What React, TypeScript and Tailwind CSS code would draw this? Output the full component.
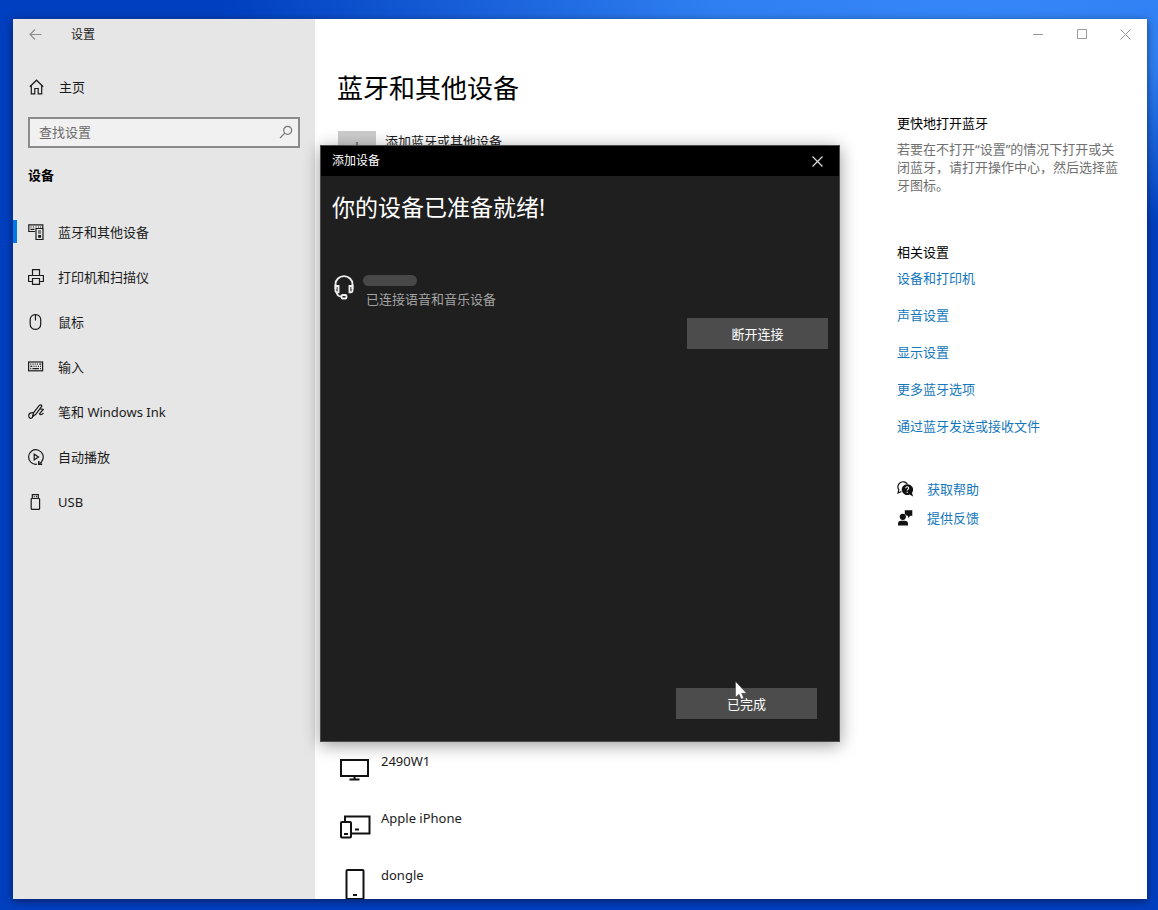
import type { ReactNode } from 'react';

const NAV_ITEMS = [
  { label: '蓝牙和其他设备', icon: <DevicesIcon />, active: true },
  { label: '打印机和扫描仪', icon: <PrinterIcon /> },
  { label: '鼠标', icon: <MouseIcon /> },
  { label: '输入', icon: <KeyboardIcon /> },
  { label: '笔和 Windows Ink', icon: <PenIcon /> },
  { label: '自动播放', icon: <AutoplayIcon /> },
  { label: 'USB', icon: <UsbIcon /> },
];

const RELATED_LINKS = [
  '设备和打印机',
  '声音设置',
  '显示设置',
  '更多蓝牙选项',
  '通过蓝牙发送或接收文件',
];

const DEVICES = [
  { name: '2490W1', icon: <MonitorIcon /> },
  { name: 'Apple iPhone', icon: <MultiDeviceIcon /> },
  { name: 'dongle', icon: <PhoneIcon /> },
];

function Icon({ children }: { children: ReactNode }) {
  return (
    <svg
      viewBox="0 0 16 16"
      className="size-4 shrink-0"
      fill="none"
      stroke="currentColor"
      strokeWidth="1.2"
      aria-hidden="true"
    >
      {children}
    </svg>
  );
}

function DevicesIcon() {
  return (
    <Icon>
      <path d="M7 7.5H.8V.8h14V4" />
      <path d="M2.500 3h1M5 3h1M7.500 3h1M10 3h1M12 3h1M2.500 5.300h4" />
      <path d="M8 4.500h7v11H8z" />
      <path d="M10 7h3M10 9h3" />
      <path d="M10.800 11.500h1.700v1.700h-1.700z" fill="currentColor" />
    </Icon>
  );
}

function PrinterIcon() {
  return (
    <Icon>
      <path d="M4.500 6.500V.7h7v5.800" />
      <path d="M4 12.500H.6v-6h14.800v6H12" />
      <path d="M4.500 9.500h7v5.800h-7z" />
    </Icon>
  );
}

function MouseIcon() {
  return (
    <Icon>
      <rect x="2.200" y=".7" width="10.500" height="14.600" rx="4.800" />
      <path d="M7.450 1v5.500" />
    </Icon>
  );
}

function KeyboardIcon() {
  return (
    <Icon>
      <rect x=".6" y="3" width="14" height="8.800" />
      <path d="M2.300 5.200h1M4.500 5.200h1M6.700 5.200h1M8.900 5.200h1M11.300 5.200h2M2.300 7.400h2M5.500 7.400h1M7.700 7.400h1M9.900 7.400h1M12.100 7.400h1M2.300 9.700h1M4.500 9.700h6.400M12.100 9.700h1" />
    </Icon>
  );
}

function PenIcon() {
  return (
    <Icon>
      <path d="M4.600 12.500l.9-3.700 6-7.600c1.200-1 2.800.1 2 1.500L7.800 10.300z" />
      <path d="M5.500 8.600C3 8.300.7 9.200.7 11.800c0 3 3.300 3.400 4.200.8" />
      <path d="M12.300 4.800l2.900.7-3.700 4.300c1 1.300 2.800.8 4-.8" />
    </Icon>
  );
}

function AutoplayIcon() {
  return (
    <Icon>
      <path d="M9 15.200A7.300 7.300 0 1 1 14.300 11.500" />
      <path d="M6.200 5.200v5.600l4.300-2.800z" />
      <path d="M14.500 11q-.8 2.500-3 3.800" />
      <path d="M10.800 12v3.300h3.400" strokeWidth="1.500" />
    </Icon>
  );
}

function UsbIcon() {
  return (
    <Icon>
      <path d="M4.300 4.500V.7h6v3.800" />
      <path d="M5.800 2.600h1M8 2.600h1" />
      <rect x="3.200" y="4.500" width="8.400" height="10.800" rx=".5" />
    </Icon>
  );
}

function HomeIcon() {
  return (
    <Icon>
      <path d="M.8 7.800L7.500 1.200l6.700 6.600" />
      <path d="M2.300 6.500v8.300h3.500V9.500h3.400v5.300h3.500V6.500" />
    </Icon>
  );
}

function DeviceFrame({ children }: { children: ReactNode }) {
  return (
    <svg
      viewBox="0 0 34 34"
      className="size-[34px] shrink-0"
      fill="none"
      stroke="#111"
      strokeWidth="2"
      aria-hidden="true"
    >
      {children}
    </svg>
  );
}

function MonitorIcon() {
  return (
    <DeviceFrame>
      <path d="M3 9h27v16H3zM16.500 25v3M11.500 28.500h10" />
    </DeviceFrame>
  );
}

function MultiDeviceIcon() {
  return (
    <DeviceFrame>
      <path d="M7 13V8.500h24.500V25.500H14" />
      <rect x="3" y="14" width="10" height="15.500" rx="1" />
      <path d="M6 26h4M17 21.500h4" />
    </DeviceFrame>
  );
}

function PhoneIcon() {
  return (
    <DeviceFrame>
      <rect x="8.500" y="5" width="17" height="29" rx="1" />
      <path d="M15 30h4" />
    </DeviceFrame>
  );
}

function HeadsetIcon() {
  return (
    <svg
      viewBox="0 0 20 25"
      className="h-[25px] w-5 shrink-0"
      fill="none"
      stroke="#eee"
      strokeWidth="1.900"
      aria-hidden="true"
    >
      <path d="M1.500 14V9.300a8.500 8.200 0 0 1 17 0V14" />
      <path d="M1.500 11h3v6.300H3q-1.500 0-1.500-1.500zM18.500 11h-3v6.300H17q1.500 0 1.500-1.500z" />
      <path d="M2.500 17q.5 4.500 5 4.500" />
      <rect x="7.500" y="20" width="5" height="3.500" rx="1.300" />
    </svg>
  );
}

function HelpIcon() {
  return (
    <svg viewBox="0 0 16 16" className="size-4 shrink-0" aria-hidden="true">
      <path
        d="M4.500 10.500L1 12l.8-3.200A5 5 0 1 1 10.300 3"
        fill="none"
        stroke="#111"
        strokeWidth="1.200"
      />
      <path d="M10.200 3.200a5.400 5.400 0 1 0 2.400 10.200L16 15.500l-1-3.700A5.400 5.400 0 0 0 10.200 3.200z" fill="#111" />
      <path
        d="M8.700 7.200c0-2 3-2 3 0 0 1.200-1.500 1.100-1.500 2.400M10.200 10.700v1.200"
        fill="none"
        stroke="#fff"
        strokeWidth="1.100"
      />
    </svg>
  );
}

function FeedbackIcon() {
  return (
    <svg viewBox="0 0 16 16" className="size-4 shrink-0" fill="#111" aria-hidden="true">
      <circle cx="5.800" cy="6.800" r="3.100" />
      <path d="M1 15.500v-1.500q0-3.300 3.300-3.300h3.400q3.300 0 3.300 3.300v1.500z" />
      <path d="M7.800.3h7.500v5.400h-2L11 8V5.700H9.800L7.800 4z" />
    </svg>
  );
}

function Sidebar() {
  return (
    <aside className="flex w-[302px] shrink-0 flex-col bg-[#e6e6e6] text-[#1b1b1b]">
      <header className="flex h-[31px] items-center">
        <button aria-label="返回" className="ml-4 text-[#8c8c8c]">
          <svg viewBox="0 0 14 14" className="size-[14px]" fill="none" stroke="currentColor" strokeWidth="1.100">
            <path d="M12.500 6.500H1M6 1.500l-5 5 5 5" />
          </svg>
        </button>
        <span className="ml-7 text-[12px]">设置</span>
      </header>

      <a href="#home" className="mt-[19px] flex h-9 items-center gap-[14px] pl-4">
        <HomeIcon />
        主页
      </a>

      <label className="mx-[15px] mt-3 flex h-[31px] items-center border-2 border-[#8a8a8a] bg-[#f1f1f1] pr-[5px] pb-[2px] pl-[9px]">
        <input
          type="text"
          aria-label="查找设置"
          placeholder="查找设置"
          className="min-w-0 flex-1 bg-transparent outline-none placeholder:text-[#6b6b6b]"
        />
        <svg viewBox="0 0 14 14" className="size-[14px]" fill="none" stroke="#777" strokeWidth="1.200" aria-hidden="true">
          <circle cx="8.700" cy="5.300" r="4" />
          <path d="M5.800 8.200L1 13" />
        </svg>
      </label>

      <h2 className="mt-[17px] ml-[15px] font-bold text-black">设备</h2>

      <nav className="mt-6">
        {NAV_ITEMS.map((item) => (
          <a key={item.label} href="#nav" className="flex h-[45px] items-center">
            <span className={item.active ? 'h-[23px] w-1 bg-[#0078e7]' : 'w-1'} />
            <span className="mr-[14px] ml-[11px]">{item.icon}</span>
            {item.label}
          </a>
        ))}
      </nav>
    </aside>
  );
}

function WindowControls() {
  return (
    <header className="flex h-[31px] shrink-0 justify-end text-[#9a9a9a]">
      <button aria-label="最小化" className="flex w-11 items-center justify-center">
        <svg viewBox="0 0 11 11" className="size-[11px]" stroke="currentColor">
          <path d="M1 5.500h10" />
        </svg>
      </button>
      <button aria-label="最大化" className="flex w-11 items-center justify-center">
        <svg viewBox="0 0 11 11" className="size-[11px]" fill="none" stroke="currentColor">
          <path d="M1.500.500h9v9h-9z" />
        </svg>
      </button>
      <button aria-label="关闭" className="flex w-11 items-center justify-center">
        <svg viewBox="0 0 11 11" className="size-[11px]" stroke="currentColor">
          <path d="M.5.500l10 10M10.500.500l-10 10" />
        </svg>
      </button>
    </header>
  );
}

function DevicePage() {
  return (
    <section className="min-w-0 flex-1 pl-[22px] text-[#1b1b1b]">
      <h1 className="mt-5 text-[26px] leading-9 text-black">蓝牙和其他设备</h1>
      <button className="mt-[25px] flex items-start gap-[9px] pl-px">
        <span className="flex size-[38px] items-center justify-center bg-[#ccc]">
          <svg viewBox="0 0 16 16" className="size-4" stroke="#333" aria-hidden="true">
            <path d="M8 0v16M0 8h16" />
          </svg>
        </span>
        添加蓝牙或其他设备
      </button>
      <ul className="mt-[582px] pl-px">
        {DEVICES.map((d) => (
          <li key={d.name} className="flex h-[57px] items-start gap-[9px]">
            {d.icon}
            {d.name}
          </li>
        ))}
      </ul>
    </section>
  );
}

function HelpPanel() {
  return (
    <aside className="w-[250px] shrink-0 pr-[22px]">
      <h3 className="mt-[63px] text-black">更快地打开蓝牙</h3>
      <p className="mt-[7px] leading-[18px] text-[#707070]">
        若要在不打开“设置”的情况下打开或关闭蓝牙，请打开操作中心，然后选择蓝牙图标。
      </p>

      <h3 className="mt-[48px] text-black">相关设置</h3>
      <ul className="mt-[6px] flex flex-col gap-[17px] text-[#1477bd]">
        {RELATED_LINKS.map((link) => (
          <li key={link}>
            <a href="#related">{link}</a>
          </li>
        ))}
      </ul>

      <div className="mt-[43px] flex flex-col gap-[9px] text-[#1477bd]">
        <a href="#help" className="flex items-center gap-[14px]">
          <HelpIcon />
          获取帮助
        </a>
        <a href="#feedback" className="flex items-center gap-[14px]">
          <FeedbackIcon />
          提供反馈
        </a>
      </div>
    </aside>
  );
}

function AddDeviceDialog() {
  return (
    <div
      role="dialog"
      aria-labelledby="dialog-title"
      className="absolute top-[126px] left-[307px] flex h-[597px] w-[520px] flex-col border border-[#4a4a4a] bg-[#1f1f1f] text-white shadow-[0_3px_16px_rgba(0,0,0,0.4)]"
    >
      <header className="flex h-[30px] shrink-0 items-center justify-between bg-black pr-4 pl-[11px]">
        <span id="dialog-title" className="text-[12px]">添加设备</span>
        <button aria-label="关闭">
          <svg viewBox="0 0 11 11" className="size-[11px]" stroke="#ddd" strokeWidth="1.200">
            <path d="M.5.500l10 10M10.500.500l-10 10" />
          </svg>
        </button>
      </header>

      <h2 className="mt-[15px] pl-[11px] text-[23px] leading-8">你的设备已准备就绪!</h2>

      <div className="mt-[52px] flex pl-[13px]">
        <HeadsetIcon />
        <div className="ml-[9px]">
          <div className="h-[11px] w-[54px] rounded-full bg-[#484848]" />
          <p className="mt-[3px] ml-[3px] text-[#a3a3a3]">已连接语音和音乐设备</p>
        </div>
      </div>
      <button className="mt-[9px] mr-[11px] h-[31px] w-[141px] self-end bg-[#4c4c4c]">断开连接</button>
      <button className="mt-auto mr-[22px] mb-[22px] h-[31px] w-[141px] self-end bg-[#4c4c4c]">已完成</button>

      <svg viewBox="0 0 12 19" className="absolute top-[535px] left-[414px] h-[19px] w-3" aria-hidden="true">
        <path d="M.5.500v15.700l3.500-3 2.200 5 2.600-1.100-2.200-4.900h5z" fill="#fff" stroke="#222" strokeWidth=".4" />
      </svg>
    </div>
  );
}

export default function App() {
  return (
    <div className="flex h-screen overflow-hidden bg-[#003fbf] bg-[radial-gradient(ellipse_760px_230px_at_980px_0,#3586f8_0%,#2f7ff2_35%,#003fbf_100%)] pt-[19px] pr-[11px] pb-[11px] pl-[13px] font-['Noto_Sans','Noto_Sans_CJK_SC',sans-serif] text-[13px] leading-5">
      <div className="relative flex min-w-0 flex-1 bg-white shadow-[0_2px_8px_rgba(0,0,0,0.5)]">
        <Sidebar />
        <main className="flex min-w-0 flex-1 flex-col overflow-hidden">
          <WindowControls />
          <div className="flex min-h-0 flex-1">
            <DevicePage />
            <HelpPanel />
          </div>
        </main>
        <AddDeviceDialog />
      </div>
    </div>
  );
}
